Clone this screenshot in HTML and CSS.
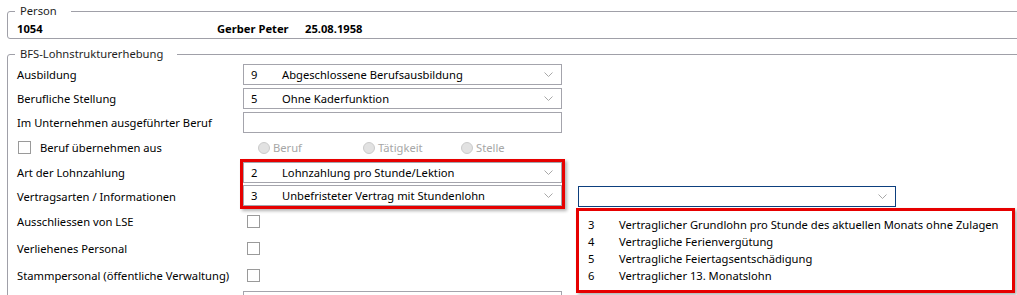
FILE: index.html
```html
<!DOCTYPE html>
<html lang="de">
<head>
    <meta charset="UTF-8">
    <title>BFS-Lohnstrukturerhebung</title>
    <link rel="stylesheet" href="styles.css">
</head>
<body>

    <fieldset class="group person">
        <legend>Person</legend>
        <div class="person-row">
            <span class="pnr">1054</span>
            <span class="pname">Gerber Peter</span>
            <span>25.08.1958</span>
        </div>
    </fieldset>

    <fieldset class="group bfs">
        <legend>BFS-Lohnstrukturerhebung</legend>
        <div class="form">
            <div class="lbl">Ausbildung</div>
            <div class="ctl">
                <div class="combo"><span class="code">9</span><span class="text">Abgeschlossene Berufsausbildung</span><svg class="chev" width="9" height="5"><polyline points="0.5,0.5 4.5,4.5 8.5,0.5"/></svg></div>
            </div>

            <div class="lbl">Berufliche Stellung</div>
            <div class="ctl">
                <div class="combo"><span class="code">5</span><span class="text">Ohne Kaderfunktion</span><svg class="chev" width="9" height="5"><polyline points="0.5,0.5 4.5,4.5 8.5,0.5"/></svg></div>
            </div>

            <div class="lbl">Im Unternehmen ausgeführter Beruf</div>
            <div class="ctl"><div class="textbox"></div></div>

            <div class="lbl check-lbl"><span class="checkbox"></span>Beruf übernehmen aus</div>
            <div class="ctl radios">
                <span class="radio r1"><span class="dot"></span>Beruf</span>
                <span class="radio r2"><span class="dot"></span>Tätigkeit</span>
                <span class="radio"><span class="dot"></span>Stelle</span>
            </div>

            <div class="lbl">Art der Lohnzahlung</div>
            <div class="ctl marked">
                <div class="combo flush"><span class="code">2</span><span class="text">Lohnzahlung pro Stunde/Lektion</span><svg class="chev" width="9" height="5"><polyline points="0.5,0.5 4.5,4.5 8.5,0.5"/></svg></div>
                <div class="combo flush"><span class="code">3</span><span class="text">Unbefristeter Vertrag mit Stundenlohn</span><svg class="chev" width="9" height="5"><polyline points="0.5,0.5 4.5,4.5 8.5,0.5"/></svg></div>
            </div>

            <div class="lbl">Vertragsarten / Informationen</div>
            <div class="side">
                <div class="combo active"><svg class="chev" width="9" height="5"><polyline points="0.5,0.5 4.5,4.5 8.5,0.5"/></svg>
                    <ul class="popup">
                        <li><span class="code">3</span>Vertraglicher Grundlohn pro Stunde des aktuellen Monats ohne Zulagen</li>
                        <li><span class="code">4</span>Vertragliche Ferienvergütung</li>
                        <li><span class="code">5</span>Vertragliche Feiertagsentschädigung</li>
                        <li><span class="code">6</span>Vertraglicher 13. Monatslohn</li>
                    </ul>
                </div>
            </div>

            <div class="lbl">Ausschliessen von LSE</div>
            <div class="ctl"><span class="checkbox box-ctl"></span></div>

            <div class="lbl">Verliehenes Personal</div>
            <div class="ctl"><span class="checkbox box-ctl"></span></div>

            <div class="lbl">Stammpersonal (öffentliche Verwaltung)</div>
            <div class="ctl"><span class="checkbox box-ctl"></span></div>

            <div class="lbl"></div>
            <div class="ctl"><div class="textbox"></div></div>
        </div>
    </fieldset>

</body>
</html>
```

FILE: styles.css
```css
body {
    margin: 0;
    padding-top: 3px;
    font-family: "Noto Sans", "Open Sans", sans-serif;
    font-size: 11.2px;
    color: #000;
    background: #fff;
    white-space: nowrap;
    overflow: hidden;
}

.group {
    margin: 0 -30px 0 7px;
    padding: 0 0 0 9px;
    border: 1px solid #a0a0a8;
    border-radius: 3px;
}

.group legend {
    margin-left: -2px;
    padding: 0 14px 0 5px;
    line-height: 16px;
    color: #1e1e1e;
}

.person-row {
    display: flex;
    height: 19px;
    align-items: center;
    font-weight: bold;
}

.pnr {
    width: 200px;
}

.pname {
    width: 88px;
}

.bfs {
    margin-top: 7px;
    height: 300px;
}

.form {
    display: grid;
    grid-template-columns: 226px 319px 16px 318px;
    grid-template-rows: 24px 24px 25px 25px 24px 24px 27px 27px 27px 24px;
    align-items: center;
}

.lbl {
    grid-column: 1;
}

.ctl {
    grid-column: 2;
}

.side {
    grid-column: 4;
}

.combo {
    position: relative;
    display: flex;
    align-items: center;
    height: 21px;
    box-sizing: border-box;
    padding: 0 8px 0 7px;
    border: 1px solid #a4a4ac;
    background: #fff;
}

.combo .code {
    width: 31px;
}

.chev {
    margin-left: auto;
    fill: none;
    stroke: #a8a8a8;
    stroke-width: 1;
}

.textbox {
    height: 21px;
    box-sizing: border-box;
    border: 1px solid #a4a4ac;
}

.checkbox {
    display: inline-block;
    width: 13px;
    height: 13px;
    box-sizing: border-box;
    border: 1px solid #9a9a9a;
    background: #fff;
}

.check-lbl {
    display: flex;
    align-items: center;
}

.check-lbl .checkbox {
    margin: 0 9px 0 1px;
}

.box-ctl {
    display: block;
    margin-left: 4px;
}

.radios {
    display: flex;
    align-items: center;
    padding-left: 15px;
    color: #a6a6a6;
}

.radio {
    display: flex;
    align-items: center;
}

.radio.r1 {
    width: 105px;
}

.radio.r2 {
    width: 98px;
}

.dot {
    width: 12px;
    height: 12px;
    box-sizing: border-box;
    margin-right: 3px;
    border: 1px solid #cbcbcb;
    border-radius: 50%;
    background: #e2e2e2;
}

/* red annotation boxes */
.marked {
    grid-row: span 2;
    display: flex;
    flex-direction: column;
    gap: 2px;
    box-shadow: 0 0 0 3px #e60000, 2px 2px 3px 3px rgba(0, 0, 0, 0.3);
}

.combo.active {
    border-color: #0d3f7e;
}

.popup {
    position: absolute;
    left: -3px;
    top: 21px;
    width: 439px;
    margin: 0;
    padding: 5px 0 6px 9px;
    box-sizing: border-box;
    list-style: none;
    border: 3px solid #e60000;
    background: #fff;
    box-shadow: 2px 2px 3px rgba(0, 0, 0, 0.3);
}

.popup li {
    display: flex;
    line-height: 17px;
}
```
